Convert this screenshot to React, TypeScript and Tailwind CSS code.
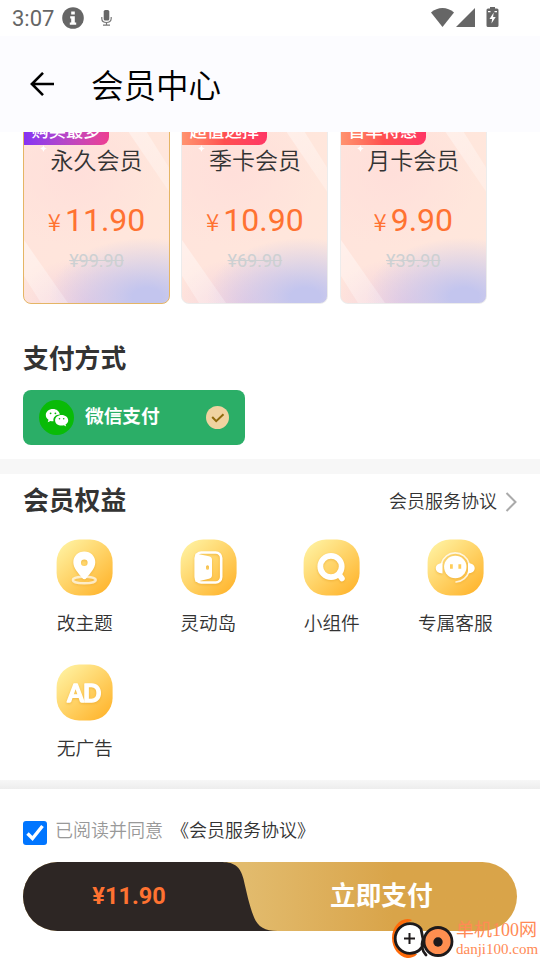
import React from 'react';

interface Plan {
  name: string;
  badge: string;
  price: string;
  oldPrice: string;
  selected?: boolean;
}

const plans: Plan[] = [
  { name: '永久会员', badge: '购买最多', price: '11.90', oldPrice: '¥99.90', selected: true },
  { name: '季卡会员', badge: '超值选择', price: '10.90', oldPrice: '¥69.90' },
  { name: '月卡会员', badge: '首单特惠', price: '9.90', oldPrice: '¥39.90' },
];

const StatusBar = () => (
  <div className="flex h-9 items-center bg-white pl-3 text-[#666666]">
    <span className="w-[50px] pt-0.5 text-[22px] leading-9">3:07</span>
    <svg className="h-[22px] w-[22px]" viewBox="0 0 22 22">
      <circle cx="11" cy="11" r="10.8" fill="#666" />
      <path d="M9.2 4.6h3.6v2.8H9.2zM8.2 9.2h4.6v6.2h1.4v2.4H7.8v-2.4h1.4v-3.8h-1z" fill="#fff" />
    </svg>
    <svg className="ml-[17px] h-4 w-[11px]" viewBox="0 0 11 16" fill="none" stroke="#777">
      <rect x="2.7" y="0" width="5.6" height="10.5" rx="1.6" fill="#666" stroke="none" />
      <path d="M.8 7v1.5c0 2.6 2 4 4.7 4s4.7-1.4 4.7-4V7M5.5 12.5v3M2 15.2h7" strokeWidth="1.2" />
    </svg>
    <svg className="ml-[319px] h-[22px] w-[68px]" viewBox="0 0 68 22" fill="#666">
      <path d="M0 5.500C6.500-.5 16.500-.5 23 5.500L11.500 20z" />
      <path d="M25 20 44 1v19z" />
      <path d="M59 0h5v1.500h2a1.500 1.500 0 0 1 1.500 1.500v15.500a1.500 1.500 0 0 1-1.500 1.500h-9a1.500 1.500 0 0 1-1.500-1.500V3A1.500 1.500 0 0 1 57 1.500h2z" />
      <path d="M62.700 5.500 58.500 12h2.600l-.6 4.500 4.200-6.500h-2.600z" fill="#fff" />
      <path d="M57 4h2.500v1.200H57zM63.500 4H66v1.200h-2.500z" fill="#fff" />
    </svg>
  </div>
);

const Header = () => (
  <div className="flex h-24 items-center bg-[#fcfcff] pl-[30px] text-black">
    <svg className="h-6 w-[25px]" viewBox="0 0 25 24" fill="none" stroke="#000" strokeWidth="2.6">
      <path d="M24 12H2M13 .9 1.900 12 13 23.100" />
    </svg>
    <h1 className="ml-9 text-[32.500px] leading-[48px] font-[350] font-['Noto_Sans_CJK_SC',sans-serif]">会员中心</h1>
  </div>
);

const PlanCard = ({ plan, index }: { plan: Plan; index: number }) => (
  <div
    className={`relative h-[212px] w-[147px] shrink-0 overflow-hidden rounded-lg border bg-[radial-gradient(ellipse_68%_28%_at_85%_97%,#c3c5ee_15%,transparent_100%),radial-gradient(ellipse_50%_22%_at_45%_100%,#f1cfdf_0%,transparent_100%),radial-gradient(ellipse_60%_35%_at_35%_38%,#ffdfda_0%,transparent_100%),linear-gradient(100deg,#ffe4dc,#ffe7dc)] text-center ${
      plan.selected ? 'border-[#e5b565]' : 'border-[#ececec]'
    }`}
  >
    <svg className="absolute inset-0 h-full w-full" viewBox="0 0 145 210">
      <defs>
        <linearGradient id={`ray${index}`} x1="0" y1="0" x2="0.600" y2="1">
          <stop offset="0" stopColor="#fff" stopOpacity=".45" />
          <stop offset="1" stopColor="#fff" stopOpacity=".25" />
        </linearGradient>
      </defs>
      <path d="M0 147v36l17 27h27z" fill={`url(#ray${index})`} />
      <path d="M93 22h19l34 54v24z" fill={`url(#ray${index})`} />
      <path d="M19.500 52q.4 3 3.300 3.500-2.900.5-3.300 3.500-.4-3-3.300-3.500 2.900-.5 3.300-3.500z" fill="#fff" />
    </svg>
    <div
      className={`absolute top-[26px] -left-px h-[26px] w-[86px] rounded-br-lg bg-linear-to-r text-[17.300px] leading-[25px] font-medium text-white ${
        plan.selected ? 'from-[#8530f5] to-[#ee3c91]' : 'from-[#ff9470] via-[#ff5050] to-[#ff3564]'
      }`}
    >
      {plan.badge}
    </div>
    <div className="relative mt-[51px] text-[23px] leading-[36px] font-[350]">{plan.name}</div>
    <div className="relative mt-[19px] flex items-baseline justify-center leading-[42px] text-[#ff7231]">
      <span className="mr-1 font-['Noto_Sans_CJK_SC',sans-serif] text-[24px] leading-none font-[350]">¥</span>
      <span className="text-[32px]">{plan.price}</span>
    </div>
    <div className="relative mt-2 text-[18px] leading-[24px] text-[#ccd0d2] line-through">{plan.oldPrice}</div>
  </div>
);

const Wechat = () => (
  <svg className="h-[35px] w-[35px]" viewBox="0 0 35 35">
    <circle cx="17.500" cy="17.500" r="17.500" fill="#09bb07" />
    <path d="M14 9c-4.200 0-7.200 2.700-7.200 6 0 2 1 3.600 2.700 4.800l-.8 2.500 2.900-1.400c.8.200 1.500.300 2.400.3h.5c-.8-4 2.500-6.800 6.400-6.700C20.200 11.100 17.400 9 14 9z" fill="#fff" />
    <path d="M22.600 15.100c-3.700 0-6.500 2.400-6.500 5.300s2.800 5.200 6.500 5.200c.7 0 1.500-.1 2.200-.3l2.400 1.200-.7-2c1.600-1 2.700-2.500 2.700-4.100 0-2.900-2.900-5.300-6.600-5.300z" fill="#fff" />
    <g fill="#09bb07">
      <circle cx="11.600" cy="13.300" r=".9" />
      <circle cx="16.400" cy="13.300" r=".9" />
      <circle cx="20.500" cy="18.700" r=".8" />
      <circle cx="24.700" cy="18.700" r=".8" />
    </g>
  </svg>
);

const benefits = [
  {
    label: '改主题',
    icon: (
      <>
        <ellipse cx="28.300" cy="41" rx="11.500" ry="3.300" fill="none" stroke="#fff" strokeOpacity=".7" strokeWidth="2.400" />
        <path fillRule="evenodd" d="M28.300 12.500c-6.300 0-11 4.700-11 10.800 0 6 5.500 11.400 8.700 15.400 1.500 2 3.200 2 4.700 0 3.200-4 8.600-9.400 8.600-15.400 0-6.100-4.700-10.800-11-10.800zm0 8a3.300 3.300 0 1 1 0 6.600 3.300 3.300 0 0 1 0-6.600z" fill="#fff" />
      </>
    ),
  },
  {
    label: '灵动岛',
    icon: (
      <>
        <rect x="15.700" y="13.500" width="25.500" height="30" rx="5.500" fill="none" stroke="#fff" strokeWidth="2.600" />
        <path fillRule="evenodd" d="M15.500 14.500 29 17.300q3 .7 3 3.500v15.500q0 2.800-3 3.500L15.500 43zM27.500 26.200a1.500 1.500 0 0 0-1.500 1.500v1.600a1.500 1.500 0 0 0 3 0v-1.600a1.500 1.500 0 0 0-1.500-1.500z" fill="#fff" />
      </>
    ),
  },
  {
    label: '小组件',
    icon: (
      <>
        <circle cx="28" cy="27.500" r="10.700" fill="none" stroke="#fff" strokeWidth="5.800" />
        <path d="m36 35.500 3 4" stroke="#fff" strokeWidth="5.500" strokeLinecap="round" />
      </>
    ),
  },
  {
    label: '专属客服',
    icon: (
      <>
        <circle cx="28.300" cy="28" r="11.200" fill="#fff" />
        <path d="M14.500 24.500a14.200 14.200 0 0 1 27.500 0M42 32a14.500 14.500 0 0 1-13 11" fill="none" stroke="#fff" strokeOpacity=".8" strokeWidth="1.700" strokeLinecap="round" />
        <path d="M15.500 24v10.500c-4-.3-6.700-2.300-6.700-5.300s2.700-5 6.700-5.200zM41 24v10.500c4-.3 6.700-2.300 6.700-5.300S45 24.200 41 24z" fill="#fff" />
        <path d="M24.400 25.300v4.400M32.800 25.300v4.400" stroke="#ffcd59" strokeWidth="2.800" />
      </>
    ),
  },
  {
    label: '无广告',
    icon: (
      <text x="28.300" y="37.500" textAnchor="middle" fill="#fff" stroke="#fff" strokeWidth="1.300" strokeLinejoin="round" fontFamily="Lato" fontWeight="700" fontSize="24" textLength="34">
        AD
      </text>
    ),
  },
];

const BenefitIcon = ({ id, children }: { id: string; children: React.ReactNode }) => (
  <svg className="h-[57px] w-[57px]" viewBox="0 0 57 57">
    <defs>
      <linearGradient id={id} x1=".1" y1=".08" x2=".85" y2=".9">
        <stop offset="0" stopColor="#fff09e" />
        <stop offset="1" stopColor="#ffb834" />
      </linearGradient>
    </defs>
    <rect x=".6" y=".5" width="56" height="56" rx="22.500" fill={`url(#${id})`} />
    <g className="drop-shadow-[0_1px_1px_rgba(225,150,20,0.45)]">{children}</g>
  </svg>
);

// Site mark in the lower right corner
const SiteMark = () => (
  <div className="absolute right-[3px] bottom-0 flex h-[43px] items-center text-[#ff8a55]">
    <svg className="h-[43px] w-[63px]" viewBox="0 0 63 43" fill="none">
      <path d="M21 3C11-1 1 9 1 21c0 10 7 19 15 20 5 0 9-2 10-4-13 1-21-6-21-17C5 11 11 6 20 4z" fill="#ff6b0a" />
      <circle cx="19" cy="21.500" r="14.800" fill="#fff" stroke="#1e1a1b" strokeWidth="2.800" strokeDasharray="77 16" strokeDashoffset="-4" />
      <circle cx="47" cy="24.500" r="14" fill="#ff8f50" stroke="#1e1a1b" strokeWidth="2.800" />
      <path d="M35 38c-4-4-5-9-3-16l-2-10" stroke="#1e1a1b" strokeWidth="2.800" strokeLinecap="round" />
      <circle cx="47" cy="25" r="4.700" fill="#1e1a1b" />
      <path d="M18.500 16v11M13 21.500h11" stroke="#1e1a1b" strokeWidth="2" />
    </svg>
    <div className="ml-0.5 w-[81px] whitespace-nowrap">
      <div className="font-['Liberation_Serif','Noto_Sans_CJK_SC',serif] text-[18px] leading-[21px]">单机100网</div>
      <div className="font-['Liberation_Serif',serif] text-[15px] leading-[17px]">danji100.com</div>
    </div>
  </div>
);

const App: React.FC = () => {
  return (
    <div className="relative flex h-[960px] w-[540px] flex-col overflow-hidden bg-white font-['Roboto','Noto_Sans_CJK_SC',sans-serif] text-[#333]">
      <StatusBar />
      <Header />

      {/* Plans, scrolled partly under the header */}
      <div className="flex h-[172px] shrink-0 items-end gap-[11.400px] overflow-hidden pl-[23px]">
        {plans.map((plan, i) => (
          <PlanCard key={plan.name} plan={plan} index={i} />
        ))}
      </div>

      {/* Payment method */}
      <div className="h-[155px] shrink-0 px-[23px] pt-[37px]">
        <h2 className="text-[25.800px] leading-9 font-bold">支付方式</h2>
        <div className="mt-[13px] flex h-[55px] w-[222px] items-center rounded-lg bg-[#2bae67] pl-4">
          <Wechat />
          <span className="ml-[11px] pb-0.5 text-[18.700px] leading-7 font-bold text-white">微信支付</span>
          <svg className="ml-[46px] h-[23px] w-[23px]" viewBox="0 0 23 23">
            <circle cx="11.500" cy="11.500" r="11.500" fill="#f0d3a0" />
            <path d="m6.200 11 4 4.200 7.300-7" fill="none" stroke="#8f6a0c" strokeWidth="2" />
          </svg>
        </div>
      </div>

      <div className="h-[15px] shrink-0 bg-[#f7f7f7]" />

      {/* Benefits */}
      <div className="h-[306px] shrink-0 px-[23px] pt-[9px]">
        <div className="flex items-center justify-between">
          <h2 className="text-[25.800px] leading-9 font-bold">会员权益</h2>
          <div className="flex items-center pt-0.5 text-[18px] leading-8 font-[350]">
            会员服务协议
            <svg className="ml-2 h-5 w-3" viewBox="0 0 12 20" fill="none" stroke="#aaa" strokeWidth="2">
              <path d="m1.500 1 9 9-9 9" />
            </svg>
          </div>
        </div>
        <div className="mt-5 grid grid-cols-4">
          {benefits.map((b, i) => (
            <div key={b.label} className="flex h-[125px] flex-col items-center">
              <BenefitIcon id={`tile${i}`}>{b.icon}</BenefitIcon>
              <span className="mt-[14px] text-[18.700px] leading-7 font-[350]">{b.label}</span>
            </div>
          ))}
        </div>
      </div>

      <div className="h-[9px] shrink-0 bg-linear-to-b from-[#f7f7f7] to-[#ededed]" />

      {/* Footer */}
      <div className="flex-1 bg-white px-[23px] pt-[29px]">
        <div className="flex h-7 items-start text-[18px] leading-[26px] font-[350]">
          <svg className="mt-[3px] h-6 w-6" viewBox="0 0 24 24">
            <rect width="24" height="24" rx="3" fill="#0075ff" />
            <path d="m4.500 12.500 5 5L19.500 5" fill="none" stroke="#fff" strokeWidth="3.400" />
          </svg>
          <span className="ml-2 text-[#999]">已阅读并同意</span>
          <span className="ml-2">《会员服务协议》</span>
        </div>
        <div className="relative mt-4 flex h-[69px] items-center overflow-hidden rounded-full bg-linear-to-r from-[#e2bb6d] from-45% to-[#d9a449] to-75%">
          <svg className="absolute top-0 left-0 h-[69px] w-[256px]" viewBox="0 0 256 69">
            <path d="M0 0h197c13 0 20 3 23.500 17 3 13 6 27 10 37 4 11 11 15 24 15H0z" fill="#2d2624" />
          </svg>
          <span className="relative w-[212px] text-center text-[23.500px] font-bold text-[#ff7231]">¥11.90</span>
          <span className="relative ml-[95px] pb-0.5 text-[25.700px] leading-9 font-bold text-white">立即支付</span>
        </div>
      </div>

      <SiteMark />
    </div>
  );
};

export default App;
